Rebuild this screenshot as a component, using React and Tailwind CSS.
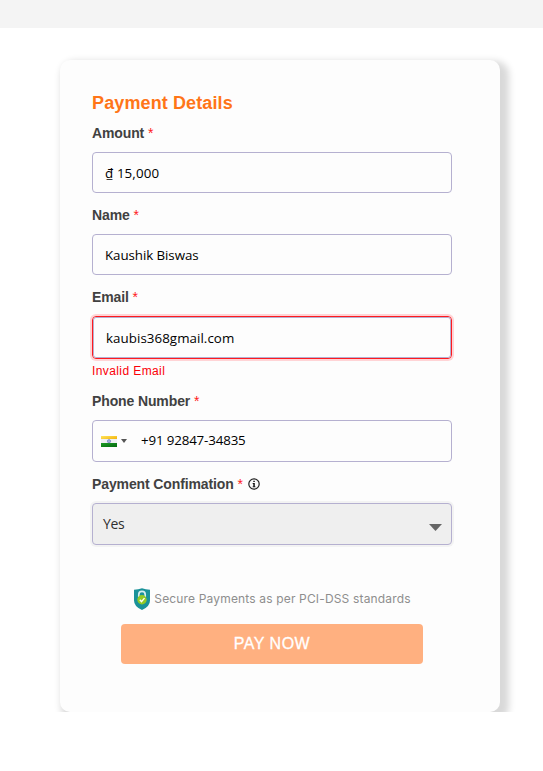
import React from "react";

const inputText = "font-['Open_Sans','Noto_Sans',sans-serif] text-[13.33px] text-black";

function Label({ children, extra }) {
  return (
    <div className="flex h-4 items-center whitespace-pre text-[14px] font-bold leading-4 tracking-[-0.12px] text-[#414141]">
      <span>{children} </span>
      <span className="font-normal text-[#ff1a1a]">*</span>
      {extra}
    </div>
  );
}

function InfoIcon() {
  return (
    <svg className="ml-[5px]" width="12" height="12" viewBox="0 0 12 12">
      <circle cx="6" cy="6" r="5.2" fill="none" stroke="#222" strokeWidth="1.2" />
      <path d="M5.3 2.7h1.5v1.4H5.3zM4.7 5h2.1v3.4h.7v.9H4.6v-.9h.7V5.9h-.6z" fill="#111" />
    </svg>
  );
}

function Flag() {
  return (
    <svg width="16" height="11" viewBox="0 0 16 11">
      <defs>
        <linearGradient id="saffron" x1="0" y1="0" x2="1" y2="1">
          <stop offset="0" stopColor="#ffe45c" />
          <stop offset="1" stopColor="#f2ad00" />
        </linearGradient>
        <linearGradient id="green" x1="0" y1="0" x2="1" y2="1">
          <stop offset="0" stopColor="#1e9b25" />
          <stop offset="1" stopColor="#046b10" />
        </linearGradient>
      </defs>
      <rect width="16" height="4" fill="url(#saffron)" />
      <rect y="3" width="16" height="5" fill="#eef0f4" />
      <rect y="7" width="16" height="4" fill="url(#green)" />
      <circle cx="8" cy="5.2" r="1.6" fill="#a9b1dc" stroke="#6f7dc0" strokeWidth=".7" />
    </svg>
  );
}

function Shield() {
  return (
    <svg width="18" height="24" viewBox="0 0 18 24">
      <path d="M1 2.8Q5.5 2.6 9 1.2Q12.5 2.6 17 2.8V13.5Q17 19.5 9 23Q1 19.5 1 13.5Z" fill="#1a9299" />
      <path d="M5.8 10V7.6a3.2 3.2 0 0 1 6.4 0V10" fill="none" stroke="#d5eef0" strokeWidth="1.7" />
      <circle cx="9" cy="12.8" r="4.7" fill="#93ca25" />
      <path d="m6.8 12.8 1.7 1.8 3-3.5" fill="none" stroke="#fff" strokeWidth="1.4" />
    </svg>
  );
}

export default function App() {
  return (
    <div className="h-[771px] w-full overflow-hidden bg-white font-['Liberation_Sans',Arial,sans-serif]">
      <div className="h-7 bg-[#f4f4f4]" />
      <div className="h-[684px] overflow-hidden pl-[60px] pt-8">
        <div className="h-[652px] w-[440px] rounded-[10px] bg-[#fdfdfd] pl-8 pr-12 pt-[33px] shadow-[5px_5px_7px_4px_#d9d9d9]">
          <h1 className="h-5 whitespace-nowrap text-[18px] font-bold leading-5 tracking-[0.12px] text-[#ff7518]">Payment Details</h1>

          <div className="mt-3">
            <Label>Amount</Label>
            <div className={`mt-[11px] flex h-[41px] items-center rounded-[4px] border border-[#b5b0d0] pl-3 pt-0.5 ${inputText}`}>
              <span className="whitespace-nowrap tracking-[0.12px]">₫ 15,000</span>
            </div>
          </div>

          <div className="mt-[14px]">
            <Label>Name</Label>
            <div className={`mt-[11px] flex h-[41px] items-center rounded-[4px] border border-[#b5b0d0] pl-3 pt-0.5 ${inputText}`}>
              <span className="whitespace-nowrap tracking-[-0.07px]">Kaushik Biswas</span>
            </div>
          </div>

          <div className="mt-[14px]">
            <Label>Email</Label>
            <div className="mt-[11px] h-[43px] rounded-[4px] border border-[#ff1a1f] shadow-[0_0_0_2px_#ffd4d6]">
              <div className={`flex h-[41px] items-center rounded-[3px] border border-[#b5b0d0] pl-3 pt-0.5 ${inputText}`}>
                <span className="whitespace-nowrap tracking-[0.06px]">kaubis368gmail.com</span>
              </div>
            </div>
            <div className="mt-[5px] h-[14px] whitespace-nowrap text-[12px] leading-[14px] tracking-[0.4px] text-[#fb0007]">Invalid Email</div>
          </div>

          <div className="mt-[15px]">
            <Label>Phone Number</Label>
            <div className={`mt-[11px] flex h-[42px] items-center rounded-[4px] border border-[#b5b0d0] pl-2 ${inputText}`}>
              <Flag />
              <svg className="ml-1" width="6" height="4" viewBox="0 0 6 4">
                <path d="M0 0h6L3 4z" fill="#555" />
              </svg>
              <span className="ml-[14px] whitespace-nowrap tracking-[-0.15px]">+91 92847-34835</span>
            </div>
          </div>

          <div className="mt-[14px]">
            <Label extra={<InfoIcon />}>Payment Confimation</Label>
            <div className="mt-[11px] flex h-[42px] items-center justify-between rounded-[4px] border border-[#b5b0d0] bg-[#efefef] pl-[10px] pr-[9px] font-['Open_Sans','Noto_Sans',sans-serif] text-[14px] text-[#303030] shadow-[0_0_0_2px_#f3f3f3]">
              <span className="-mt-0.5 tracking-[-0.3px]">Yes</span>
              <svg className="mt-1.5" width="13" height="7" viewBox="0 0 13 7">
                <path d="M0 0h13L6.5 7z" fill="#666" />
              </svg>
            </div>
          </div>

          <div className="mt-[42px] flex h-6 items-center justify-center">
            <Shield />
            <span className="ml-[3px] whitespace-nowrap font-['Inter',sans-serif] text-[12px] tracking-[0.16px] text-[#8e8e8e]">Secure Payments as per PCI-DSS standards</span>
          </div>
          <button className="ml-[29px] mt-[13px] flex h-10 w-[302px] items-center justify-center rounded-[4px] bg-[#ffb080] text-[16px] tracking-[0.5px] text-white [-webkit-text-stroke:0.3px_white]">PAY NOW</button>
        </div>
      </div>
    </div>
  );
}
